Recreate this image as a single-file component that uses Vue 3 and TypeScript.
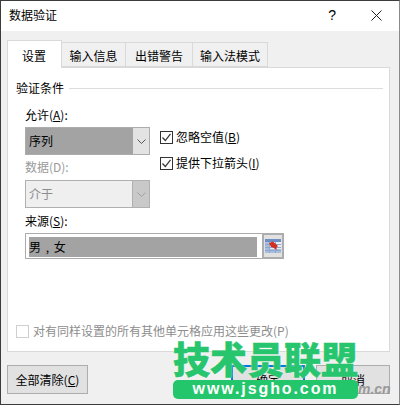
<script setup lang="ts">
const tabs = ["设置", "输入信息", "出错警告", "输入法模式"];
</script>

<template>
  <div class="dialog">
    <header class="titlebar">
      <span class="title">数据验证</span>
      <span class="help">?</span>
      <svg class="close" width="11" height="11" viewBox="0 0 11 11">
        <path d="M0.5 0.5L10.5 10.5M10.5 0.5L0.5 10.5" stroke="#222" fill="none" />
      </svg>
    </header>

    <div class="body">
      <div class="tabs">
        <div v-for="(tab, i) in tabs" :key="tab" class="tab" :class="{ active: i === 0 }">{{ tab }}</div>
      </div>

      <section class="panel">
        <div class="group-title">
          <span>验证条件</span>
          <i class="rule"></i>
        </div>

        <div class="top-row">
          <div class="fields">
            <div class="label">允许(<u>A</u>):</div>
            <div class="select selected">
              <span class="value">序列</span>
              <span class="arrow">
                <svg width="9" height="5" viewBox="0 0 9 5"><path d="M0.5 0.5L4.5 4.5L8.5 0.5" stroke="#555" fill="none" /></svg>
              </span>
            </div>
            <div class="label muted gap-label">数据(D):</div>
            <div class="select disabled">
              <span class="value">介于</span>
              <span class="arrow">
                <svg width="9" height="5" viewBox="0 0 9 5"><path d="M0.5 0.5L4.5 4.5L8.5 0.5" stroke="#a0a0a0" fill="none" /></svg>
              </span>
            </div>
          </div>
          <div class="checks">
            <label class="check">
              <span class="box">
                <svg width="11" height="11" viewBox="0 0 11 11"><path d="M1.5 5.5L4.3 8.5L9.5 1.8" stroke="#333" stroke-width="1.2" fill="none" /></svg>
              </span>
              <span>忽略空值(<u>B</u>)</span>
            </label>
            <label class="check">
              <span class="box">
                <svg width="11" height="11" viewBox="0 0 11 11"><path d="M1.5 5.5L4.3 8.5L9.5 1.8" stroke="#333" stroke-width="1.2" fill="none" /></svg>
              </span>
              <span>提供下拉箭头(<u>I</u>)</span>
            </label>
          </div>
        </div>

        <div class="label source-label">来源(<u>S</u>):</div>
        <div class="source">
          <div class="input"><span class="input-sel">男 , 女</span></div>
          <div class="ref-btn">
            <svg width="16" height="14" viewBox="0 0 16 14">
              <rect width="16" height="14" fill="#e9eff8" />
              <rect width="16" height="3" fill="#6d8fc6" />
              <rect y="10" width="16" height="4" fill="#a9bedd" />
              <rect y="3" width="4" height="7" fill="#a9bedd" />
              <path d="M0 5.5H16M0 8.5H16M0 11.5H16M4.5 3V14M10.5 3V14" stroke="#8ea8d0" stroke-width="1" fill="none" />
              <path d="M4 4L8 2.5L13 7L11.5 8.5V11L8 8.5L6 8Z" fill="#d4301f" />
            </svg>
          </div>
        </div>

        <label class="apply-all">
          <span class="box off"></span>
          <span>对有同样设置的所有其他单元格应用这些更改(P)</span>
        </label>
      </section>

      <footer class="actions">
        <button class="btn clear" type="button">全部清除(<u>C</u>)</button>
        <div class="right-btns">
          <button class="btn ok" type="button">确定</button>
          <button class="btn cancel" type="button">取消</button>
        </div>
      </footer>
    </div>

    <div class="watermark">
      <div class="wm-title">技术员联盟</div>
      <div class="wm-pill">www.jsgho.com</div>
    </div>
    <div class="wm-tail">m.cn</div>
  </div>
</template>

<style scoped>
.dialog {
  position: relative;
  box-sizing: border-box;
  width: 400px;
  height: 405px;
  display: flex;
  flex-direction: column;
  overflow: hidden;
  border: 1px solid #3c3c3c;
  border-right-color: #8a8a8a;
  background: #f0f0f0;
  color: #000;
  font-family: "Noto Sans CJK SC", "Liberation Sans", sans-serif;
  font-size: 12px;
  line-height: 16px;
}

.titlebar {
  box-sizing: border-box;
  height: 30px;
  flex: none;
  display: flex;
  align-items: center;
  padding: 0 17px 2px 8px;
  background: #fff;
}

.title {
  flex: 1;
}

.help {
  margin-right: 35px;
  font-family: "Liberation Sans", sans-serif;
  font-size: 14px;
}

.body {
  flex: 1;
  display: flex;
  flex-direction: column;
  padding: 9px 9px 10px 6px;
}

.tabs {
  display: flex;
  height: 27px;
  flex: none;
  align-items: flex-end;
  position: relative;
  z-index: 1;
}

.tab {
  box-sizing: border-box;
  height: 25px;
  padding-top: 5px;
  text-align: center;
  border: 1px solid #d9d9d9;
  border-left: none;
  background: #f0f0f0;
}

.tab:nth-child(2) {
  width: 64px;
}

.tab:nth-child(3) {
  width: 67px;
}

.tab:nth-child(4) {
  width: 75px;
}

.tab.active {
  width: 55px;
  height: 28px;
  margin-bottom: -1px;
  padding: 7px 0 0 14px;
  text-align: left;
  border-left: 1px solid #d9d9d9;
  border-bottom: none;
  background: #fff;
}

.panel {
  flex: none;
  box-sizing: border-box;
  height: 285px;
  padding: 12px 6px 0 8px;
  display: flex;
  flex-direction: column;
  background: #fff;
  border: 1px solid #d9d9d9;
}

.group-title {
  display: flex;
  align-items: center;
  gap: 5px;
}

.rule {
  flex: 1;
  height: 1px;
  background: #dcdcdc;
}

.top-row {
  display: flex;
  margin: 11px 0 0 9px;
}

.fields {
  width: 125px;
  flex: none;
}

.label {
  height: 16px;
}

.muted {
  color: #9a9a9a;
}

.gap-label {
  margin-top: 4px;
}

.select {
  box-sizing: border-box;
  height: 28px;
  margin-top: 4px;
  display: flex;
  border: 1px solid #acacac;
}

.select .value {
  flex: 1;
  padding: 5px 0 0 3px;
}

.select .arrow {
  width: 16px;
  display: flex;
  align-items: center;
  justify-content: center;
}

.selected {
  background: #a3a3a3;
}

.selected .arrow {
  background: #e3e3e3;
}

.disabled {
  margin-top: 5px;
  background: #efefef;
  color: #8d8d8d;
  border-color: #b0b0b0;
}

.disabled .arrow {
  background: #c9c9c9;
  border-left: 1px solid #b0b0b0;
}

.checks {
  margin: 22px 0 0 10px;
  display: flex;
  flex-direction: column;
  gap: 10px;
}

.check {
  display: flex;
  align-items: center;
  gap: 3px;
}

.box {
  box-sizing: border-box;
  width: 13px;
  height: 13px;
  flex: none;
  display: flex;
  border: 1px solid #333;
  background: #fff;
}

.box.off {
  border-color: #cfcfcf;
}

.source-label {
  margin: 5px 0 0 9px;
}

.source {
  display: flex;
  height: 26px;
  margin: 4px 0 0 9px;
}

.input {
  box-sizing: border-box;
  width: 237px;
  padding: 3px;
  border: 1px solid #acacac;
  border-right: none;
}

.input-sel {
  display: block;
  box-sizing: border-box;
  width: 228px;
  height: 20px;
  padding: 2px 0 0 0;
  word-spacing: 2px;
  background: #a3a3a3;
}

.ref-btn {
  box-sizing: border-box;
  width: 22px;
  display: flex;
  align-items: center;
  justify-content: center;
  background: #e1e1e1;
  border: 2px solid #adadad;
}

.apply-all {
  display: flex;
  align-items: center;
  gap: 4px;
  margin-top: 64px;
  color: #8d8d8d;
}

.actions {
  display: flex;
  justify-content: space-between;
  margin-top: 13px;
}

.right-btns {
  display: flex;
  gap: 11px;
}

.btn {
  box-sizing: border-box;
  height: 29px;
  padding: 1px 0 0;
  background: #e1e1e1;
  border: 1px solid #adadad;
  color: #000;
  font: inherit;
}

.clear {
  width: 81px;
}

.ok {
  width: 74px;
  border: 2px solid #0078d7;
}

.cancel {
  width: 74px;
}

.watermark {
  position: absolute;
  left: 172px;
  top: 335px;
  width: 185px;
}

.wm-title {
  height: 44px;
  color: #27c56d;
  font-size: 37px;
  font-weight: 900;
  line-height: 44px;
  white-space: nowrap;
  -webkit-text-stroke: 0.5px #27c56d;
  text-shadow: 0 0 2px #fff;
}

.wm-pill {
  height: 19px;
  border-radius: 5px;
  background: #24c66c;
  color: #fff;
  font-family: "Liberation Sans", sans-serif;
  font-size: 16px;
  font-weight: 700;
  line-height: 18px;
  letter-spacing: 1.9px;
  text-align: center;
  white-space: nowrap;
}

.wm-tail {
  position: absolute;
  left: 357px;
  top: 380px;
  color: #9a9a9a;
  font-family: "Liberation Sans", sans-serif;
  font-size: 14px;
  font-style: italic;
  font-weight: 700;
}
</style>

<style>
html,
body {
  margin: 0;
  background: #fff;
}
</style>
